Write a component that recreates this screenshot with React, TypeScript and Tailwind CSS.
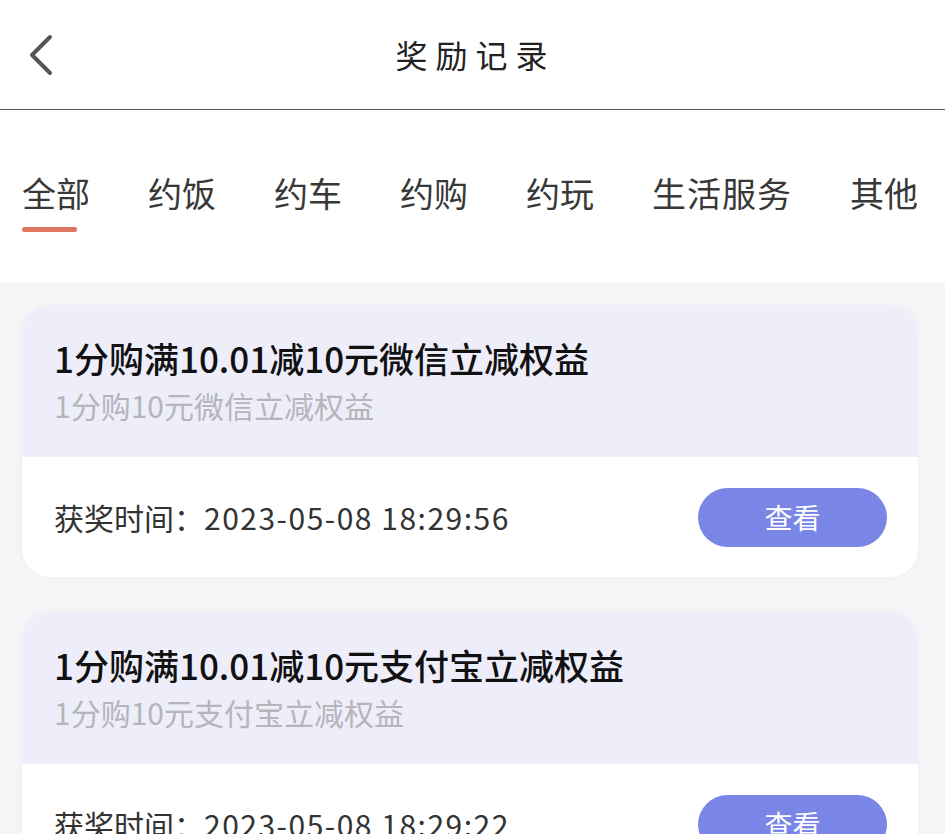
import React from "react";

const tabs = ["全部", "约饭", "约车", "约购", "约玩", "生活服务", "其他"];

const records = [
  {
    title: "1分购满10.01减10元微信立减权益",
    sub: "1分购10元微信立减权益",
    time: "2023-05-08 18:29:56",
  },
  {
    title: "1分购满10.01减10元支付宝立减权益",
    sub: "1分购10元支付宝立减权益",
    time: "2023-05-08 18:29:22",
  },
];

export default function App() {
  return (
    <div
      className="w-[945px] h-[834px] overflow-hidden bg-[#f5f5f7]"
      style={{ fontFamily: '"Noto Sans CJK SC", "Noto Sans", sans-serif' }}
    >
      {/* Header */}
      <div className="relative h-[110px] bg-white border-b border-[#555] flex items-center justify-center">
        <svg
          className="absolute left-[24px] top-[32px]"
          width="34"
          height="46"
          viewBox="0 0 34 46"
          fill="none"
        >
          <path
            d="M26 5 L8 23 L26 41"
            stroke="#555558"
            strokeWidth="4"
            strokeLinecap="round"
            strokeLinejoin="round"
          />
        </svg>
        <div className="text-[32px] tracking-[8px] text-[#222] pl-[6px] -mt-[2px]">
          奖励记录
        </div>
      </div>

      {/* Tabs */}
      <div className="h-[173px] bg-white flex items-start pl-[22px] gap-[58px] pt-[63px]">
        {tabs.map((t, i) => (
          <div key={t} className="flex flex-col items-start">
            <div
              className={
                i === 5
                  ? "text-[34px] leading-[40px] text-[#383838] whitespace-nowrap tracking-[1px]"
                  : "text-[34px] leading-[40px] text-[#383838] whitespace-nowrap"
              }
            >
              {t}
            </div>
            {i === 0 && (
              <div className="mt-[14px] w-[55px] h-[5px] rounded-full bg-[#e0745e]" />
            )}
          </div>
        ))}
      </div>

      {/* Cards */}
      <div className="flex flex-col gap-[35px] px-[22px] pt-[22px]">
        {records.map((r) => (
          <div
            key={r.title}
            className="w-[896px] rounded-[28px] overflow-hidden bg-white shadow-[0_0_6px_rgba(0,0,0,0.03)]"
          >
            <div className="h-[152px] bg-[#eeeefa] pl-[32px] pt-[33px]">
              <div className="text-[35px] leading-[40px] font-medium text-[#111] whitespace-nowrap">
                {r.title}
              </div>
              <div className="mt-[7px] text-[30px] leading-[40px] text-[#b5b5ba] whitespace-nowrap">
                {r.sub}
              </div>
            </div>
            <div className="h-[120px] flex items-center justify-between pl-[32px] pr-[31px]">
              <div className="text-[30px] text-[#333] whitespace-nowrap">
                获奖时间：<span className="tracking-[1.5px]">{r.time}</span>
              </div>
              <div className="w-[189px] h-[59px] rounded-full bg-[#7986e6] flex items-center justify-center text-white text-[28px]">
                查看
              </div>
            </div>
          </div>
        ))}
      </div>
    </div>
  );
}
